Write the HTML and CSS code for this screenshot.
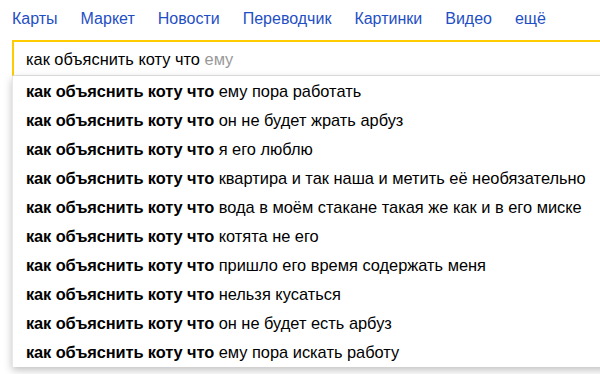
FILE: index.html
```html
<!DOCTYPE html>
<html lang="ru">
<head>
    <meta charset="UTF-8">
    <title>Как объяснить коту</title>
    <link rel="stylesheet" href="styles.css">
</head>
<body>

<div class="page">
    <!-- Services -->
    <ul class="services">
        <li><a href="#">Карты</a></li>
        <li><a href="#">Маркет</a></li>
        <li><a href="#">Новости</a></li>
        <li><a href="#">Переводчик</a></li>
        <li><a href="#">Картинки</a></li>
        <li><a href="#">Видео</a></li>
        <li><a href="#">ещё</a></li>
    </ul>

    <div class="search">
        <div class="search-input">как объяснить коту что <span class="hint">ему</span></div>

        <ul class="suggest">
            <li><b>как объяснить коту что</b> ему пора работать</li>
            <li><b>как объяснить коту что</b> он не будет жрать арбуз</li>
            <li><b>как объяснить коту что</b> я его люблю</li>
            <li><b>как объяснить коту что</b> квартира и так наша и метить её необязательно</li>
            <li><b>как объяснить коту что</b> вода в моём стакане такая же как и в его миске</li>
            <li><b>как объяснить коту что</b> котята не его</li>
            <li><b>как объяснить коту что</b> пришло его время содержать меня</li>
            <li><b>как объяснить коту что</b> нельзя кусаться</li>
            <li><b>как объяснить коту что</b> он не будет есть арбуз</li>
            <li><b>как объяснить коту что</b> ему пора искать работу</li>
        </ul>
    </div>
</div>

</body>
</html>
```

FILE: styles.css
```css
body {
    font-family: "Liberation Sans", Arial, sans-serif;
    margin: 0;
    padding: 0;
    background-color: #fff;
    color: #000;
    overflow: hidden;
    height: 374px;
}

.page {
    width: 600px;
}

.services {
    list-style-type: none;
    margin: 0;
    padding: 8px 0 0 12px;
    height: 32px;
    display: flex;
    gap: 23px;
    font-size: 16px;
    line-height: 22px;
}

.services a {
    text-decoration: none;
    color: #1f4fc4;
}

.search {
    margin-left: 12px;
    margin-right: -20px;
}

.search-input {
    height: 33px;
    border-top: 2px solid #ffcc00;
    border-left: 2px solid #ffcc00;
    padding-left: 12px;
    font-size: 16.4px;
    line-height: 34px;
    border-bottom: 1px solid #e4e4e4;
}

.hint {
    color: #999;
}

.suggest {
    list-style-type: none;
    margin: 0;
    padding: 1px 0 0 0;
    background-color: #fff;
    border-left: 1px solid #e8e8e8;
    box-shadow: 0 3px 8px rgba(0, 0, 0, 0.25);
    font-size: 16.4px;
}

.suggest li {
    height: 29px;
    line-height: 29px;
    padding-left: 13px;
    white-space: nowrap;
}

.suggest b {
    letter-spacing: -0.1px;
}
```
